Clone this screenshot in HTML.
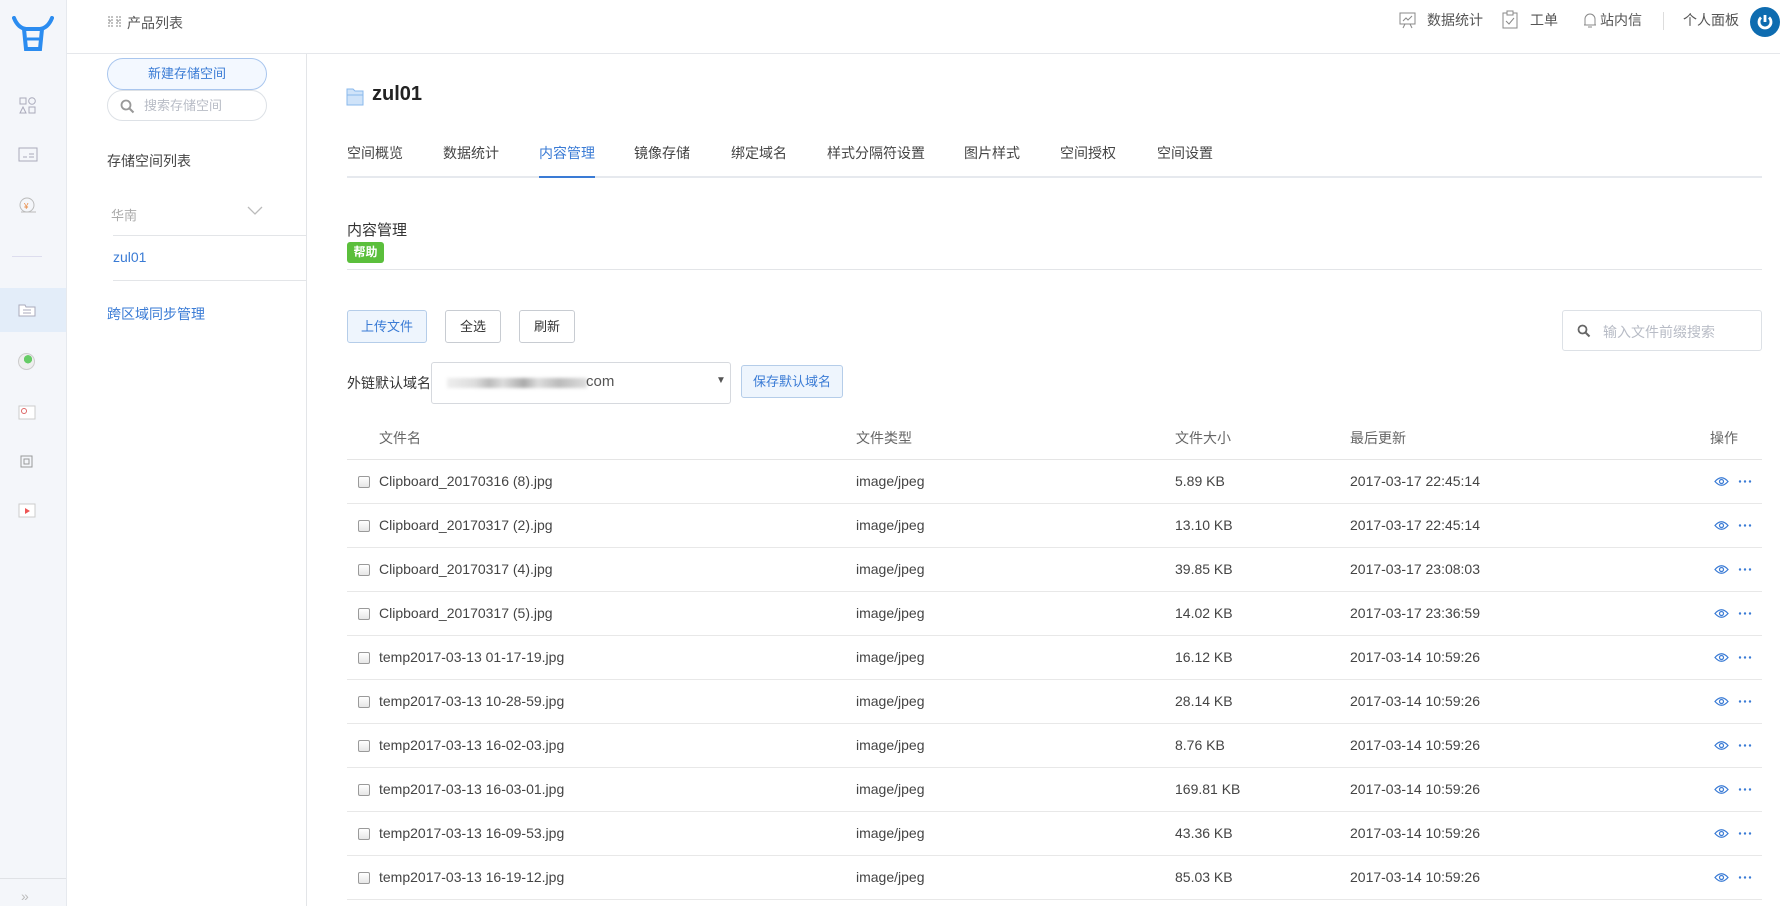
<!DOCTYPE html>
<html><head><meta charset="utf-8"><style>
*{margin:0;padding:0;box-sizing:border-box}
body{width:1780px;height:906px;overflow:hidden;background:#fff;font-family:"Liberation Sans","Noto Sans CJK SC",sans-serif;font-size:14px;color:#333;position:relative}
.a{position:absolute}
.side{left:0;top:0;width:67px;height:906px;background:#f4f6fa;border-right:1px solid #e6e9ee}
.hdr{left:67px;top:0;right:0;height:54px;border-bottom:1px solid #e5e7eb;background:#fff}
.sub{left:67px;top:54px;width:240px;height:852px;border-right:1px solid #e3e5e8;background:#fff}
.tab{top:143px;font-size:14px;color:#444}
.btn{border:1px solid #c8ccd2;border-radius:3px;height:33px;line-height:31px;text-align:center;font-size:13px;color:#333;background:#fff}
.row{left:347px;width:1415px;height:44px;border-bottom:1px solid #e8e8e8}
.row span{position:absolute;top:13px;font-size:14px;color:#444}
.cb{position:absolute;left:11px;top:16px;width:12px;height:12px;border:1px solid #9a9a9a;border-radius:2px;background:linear-gradient(#fff,#e6e6e6)}
.th{top:428px;font-size:14px;color:#666}
</style></head><body>
<div class="a side">
  <svg class="a" style="left:12px;top:16px" width="42" height="36" viewBox="0 0 42 36"><path d="M2 2 Q6 12 14 13 L28 13 Q36 12 40 2" fill="none" stroke="#2b8cf0" stroke-width="4" stroke-linecap="round"/><path d="M12 13 L14 33 L28 33 L30 13" fill="none" stroke="#2b8cf0" stroke-width="4"/><path d="M15 23 L27 23" stroke="#2b8cf0" stroke-width="3"/></svg>
  <svg class="a" style="left:19px;top:97px" width="18" height="18"><rect x="1" y="1" width="6" height="6" fill="none" stroke="#aab"/><circle cx="13" cy="4" r="3.3" fill="none" stroke="#aab"/><path d="M4 10 L7 16 L1 16Z" fill="none" stroke="#aab"/><rect x="10" y="10" width="6" height="6" fill="none" stroke="#aab"/></svg>
  <svg class="a" style="left:18px;top:146px" width="20" height="16"><rect x="1" y="2" width="18" height="13" fill="none" stroke="#aab"/><path d="M5 11h4M11 8h5M11 11h5" stroke="#aab"/></svg>
  <svg class="a" style="left:18px;top:196px" width="20" height="20"><circle cx="9" cy="9" r="7" fill="none" stroke="#bbb"/><text x="6" y="13" font-size="8" fill="#e8843a">¥</text><path d="M3 16h15" stroke="#bbb"/></svg>
  <div class="a" style="left:12px;top:256px;width:30px;height:1px;background:#dde"></div>
  <div class="a" style="left:0;top:288px;width:66px;height:44px;background:#e3edf9"></div>
  <svg class="a" style="left:18px;top:302px" width="18" height="15"><path d="M1 3h6l1 2h9v9H1z" fill="#fff" stroke="#aab"/><path d="M5 8h8M5 11h8" stroke="#aab"/></svg>
  <div class="a" style="left:18px;top:353px;width:17px;height:17px;border-radius:50%;background:radial-gradient(circle at 60% 35%,#6c6 30%,#eee 32%);border:1px solid #ccc"></div>
  <svg class="a" style="left:18px;top:405px" width="18" height="15"><rect x="1" y="1" width="16" height="13" fill="#fff" stroke="#ccc"/><circle cx="6" cy="6" r="2.5" fill="none" stroke="#d66"/></svg>
  <svg class="a" style="left:18px;top:453px" width="17" height="17"><rect x="3" y="3" width="11" height="11" fill="none" stroke="#999"/><rect x="6" y="6" width="5" height="5" fill="none" stroke="#999"/></svg>
  <svg class="a" style="left:18px;top:503px" width="18" height="15"><rect x="1" y="1" width="16" height="13" fill="#fff" stroke="#ccc"/><path d="M7 5l5 3-5 3z" fill="#e55"/></svg>
  <div class="a" style="left:0;top:878px;width:66px;height:1px;background:#e0e2e6"></div>
  <div class="a" style="left:21px;top:888px;color:#bbb;font-size:14px">»</div>
</div>
<div class="a hdr">
  <svg class="a" style="left:41px;top:15px" width="13" height="13"><path d="M1 1v11M4 1v11M9 1v11M12 1v11M1 6h3M9 6h3" stroke="#999" stroke-width="1.2" stroke-dasharray="2 1"/></svg>
  <div class="a" style="left:60px;top:13px;font-size:14px;color:#555">产品列表</div>
  <svg class="a" style="left:1332px;top:11px" width="18" height="18"><rect x="1" y="2" width="15" height="11" fill="none" stroke="#888"/><path d="M4 10l3-3 2 2 4-4M6 13l-2 4M11 13l2 4" fill="none" stroke="#888"/></svg>
  <div class="a" style="left:1360px;top:10px;font-size:14px;color:#555">数据统计</div>
  <svg class="a" style="left:1435px;top:10px" width="16" height="20"><rect x="1" y="3" width="14" height="15" fill="none" stroke="#888"/><rect x="5" y="1" width="6" height="4" fill="#fff" stroke="#888"/><path d="M4 11l3 3 5-6" fill="none" stroke="#888"/></svg>
  <div class="a" style="left:1463px;top:10px;font-size:14px;color:#555">工单</div>
  <svg class="a" style="left:1516px;top:11px" width="14" height="18"><path d="M2 14V8a5 5 0 0 1 10 0v6zM1 14h12M5 16h4" fill="none" stroke="#888"/></svg>
  <div class="a" style="left:1533px;top:10px;font-size:14px;color:#555">站内信</div>
  <div class="a" style="left:1596px;top:12px;width:1px;height:18px;background:#ddd"></div>
  <div class="a" style="left:1616px;top:10px;font-size:14px;color:#555">个人面板</div>
  <div class="a" style="left:1683px;top:7px;width:30px;height:30px;border-radius:50%;background:#0e6cb0"></div>
  <svg class="a" style="left:1689px;top:13px" width="18" height="18"><path d="M5 4.5a6 6 0 1 0 8 0" fill="none" stroke="#fff" stroke-width="2.8"/><path d="M9 2v7" stroke="#fff" stroke-width="2.8"/></svg>
</div>
<div class="a sub">
  <div class="a" style="left:40px;top:4px;width:160px;height:32px;border:1px solid #a9c6ee;border-radius:16px;background:#f3f8ff;color:#3a7bd5;text-align:center;line-height:30px;font-size:13px">新建存储空间</div>
  <div class="a" style="left:40px;top:36px;width:160px;height:31px;border:1px solid #dde1e6;border-radius:16px;background:#fff;color:#b8bcc6;line-height:29px;font-size:13px;padding-left:36px">搜索存储空间</div>
  <svg class="a" style="left:53px;top:45px" width="15" height="15"><circle cx="6" cy="6" r="4.5" fill="none" stroke="#999" stroke-width="1.8"/><path d="M9.5 9.5l4 4" stroke="#999" stroke-width="2"/></svg>
  <div class="a" style="left:40px;top:97px;font-size:14px;color:#444">存储空间列表</div>
  <div class="a" style="left:44px;top:151px;font-size:13px;color:#aaa">华南</div>
  <svg class="a" style="left:180px;top:152px" width="16" height="10"><path d="M1 1l7 7 7-7" fill="none" stroke="#bbb" stroke-width="1.3"/></svg>
  <div class="a" style="left:46px;top:181px;width:194px;height:1px;background:#e3e5e8"></div>
  <div class="a" style="left:46px;top:195px;font-size:14px;color:#3a7bd5">zul01</div>
  <div class="a" style="left:46px;top:226px;width:194px;height:1px;background:#e3e5e8"></div>
  <div class="a" style="left:40px;top:250px;font-size:14px;color:#3a7bd5">跨区域同步管理</div>
</div>
<svg class="a" style="left:346px;top:86px" width="18" height="20"><path d="M1 3h6l2 2h8v14H1z" fill="#cfe3f9" stroke="#8ab8ec"/><path d="M1 9h16" stroke="#8ab8ec"/></svg>
<div class="a" style="left:372px;top:83px;font-size:20px;font-weight:bold;color:#222">zul01</div>
<div class="a tab" style="left:347px">空间概览</div>
<div class="a tab" style="left:443px">数据统计</div>
<div class="a tab" style="left:539px;color:#3a7bd5">内容管理</div>
<div class="a tab" style="left:634px">镜像存储</div>
<div class="a tab" style="left:731px">绑定域名</div>
<div class="a tab" style="left:827px">样式分隔符设置</div>
<div class="a tab" style="left:964px">图片样式</div>
<div class="a tab" style="left:1060px">空间授权</div>
<div class="a tab" style="left:1157px">空间设置</div>
<div class="a" style="left:347px;top:176px;width:1415px;height:2px;background:#e6e9ee"></div>
<div class="a" style="left:539px;top:176px;width:56px;height:2px;background:#3a7bd5"></div>
<div class="a" style="left:347px;top:219px;font-size:15px;color:#333">内容管理</div>
<div class="a" style="left:347px;top:242px;width:37px;height:21px;background:#5bbf3c;border-radius:3px;color:#fff;font-size:12px;font-weight:bold;text-align:center;line-height:21px">帮助</div>
<div class="a" style="left:347px;top:269px;width:1415px;height:1px;background:#e3e5e8"></div>
<div class="a btn" style="left:347px;top:310px;width:80px;background:#eef5fd;border-color:#b5cde9;color:#3a7bd5">上传文件</div>
<div class="a btn" style="left:445px;top:310px;width:56px">全选</div>
<div class="a btn" style="left:519px;top:310px;width:56px">刷新</div>
<div class="a" style="left:347px;top:373px;font-size:14px;color:#333">外链默认域名</div>
<div class="a" style="left:431px;top:362px;width:300px;height:42px;border:1px solid #d6d9de;border-radius:3px"></div>
<div class="a" style="left:447px;top:378px;width:140px;height:10px;background:linear-gradient(90deg,#eee 0,#ddd 20%,#bbb 30%,#ddd 40%,#aaa 55%,#ddd 65%,#bbb 80%,#ddd 100%);filter:blur(1.5px)"></div>
<div class="a" style="left:586px;top:373px;font-size:15px;color:#555">com</div>
<div class="a" style="left:716px;top:375px;font-size:10px;color:#555">▼</div>
<div class="a btn" style="left:741px;top:365px;width:102px;background:#eef5fd;border-color:#b5cde9;color:#3a7bd5">保存默认域名</div>
<div class="a" style="left:1562px;top:310px;width:200px;height:41px;border:1px solid #dde1e6;border-radius:3px"></div>
<svg class="a" style="left:1577px;top:324px" width="14" height="14"><circle cx="5.5" cy="5.5" r="4" fill="none" stroke="#666" stroke-width="1.8"/><path d="M8.5 8.5l4 4" stroke="#666" stroke-width="2"/></svg>
<div class="a" style="left:1603px;top:322px;font-size:14px;color:#b8bcc6">输入文件前缀搜索</div>
<div class="a th" style="left:379px">文件名</div>
<div class="a th" style="left:856px">文件类型</div>
<div class="a th" style="left:1175px">文件大小</div>
<div class="a th" style="left:1350px">最后更新</div>
<div class="a th" style="left:1710px">操作</div>
<div class="a" style="left:347px;top:459px;width:1415px;height:1px;background:#e5e5e5"></div>
<div id="rows"></div>
<script>
var d=[["Clipboard_20170316 (8).jpg","5.89 KB","2017-03-17 22:45:14"],["Clipboard_20170317 (2).jpg","13.10 KB","2017-03-17 22:45:14"],["Clipboard_20170317 (4).jpg","39.85 KB","2017-03-17 23:08:03"],["Clipboard_20170317 (5).jpg","14.02 KB","2017-03-17 23:36:59"],["temp2017-03-13 01-17-19.jpg","16.12 KB","2017-03-14 10:59:26"],["temp2017-03-13 10-28-59.jpg","28.14 KB","2017-03-14 10:59:26"],["temp2017-03-13 16-02-03.jpg","8.76 KB","2017-03-14 10:59:26"],["temp2017-03-13 16-03-01.jpg","169.81 KB","2017-03-14 10:59:26"],["temp2017-03-13 16-09-53.jpg","43.36 KB","2017-03-14 10:59:26"],["temp2017-03-13 16-19-12.jpg","85.03 KB","2017-03-14 10:59:26"]];
var h="";d.forEach(function(r,i){h+='<div class="a row" style="top:'+(460+44*i)+'px"><div class="cb"></div><span style="left:32px">'+r[0]+'</span><span style="left:509px">image/jpeg</span><span style="left:828px">'+r[1]+'</span><span style="left:1003px">'+r[2]+'</span><svg style="position:absolute;left:1367px;top:16px" width="15" height="11"><path d="M1 5.5Q7.5-2 14 5.5Q7.5 13 1 5.5z" fill="none" stroke="#3a7bd5" stroke-width="1.2"/><circle cx="7.5" cy="5.5" r="2" fill="none" stroke="#3a7bd5" stroke-width="1.2"/></svg><svg style="position:absolute;left:1391px;top:19px" width="14" height="5"><circle cx="2" cy="2.5" r="1.2" fill="#3a7bd5"/><circle cx="7" cy="2.5" r="1.2" fill="#3a7bd5"/><circle cx="12" cy="2.5" r="1.2" fill="#3a7bd5"/></svg></div>'});
document.getElementById("rows").innerHTML=h;
</script>
</body></html>
